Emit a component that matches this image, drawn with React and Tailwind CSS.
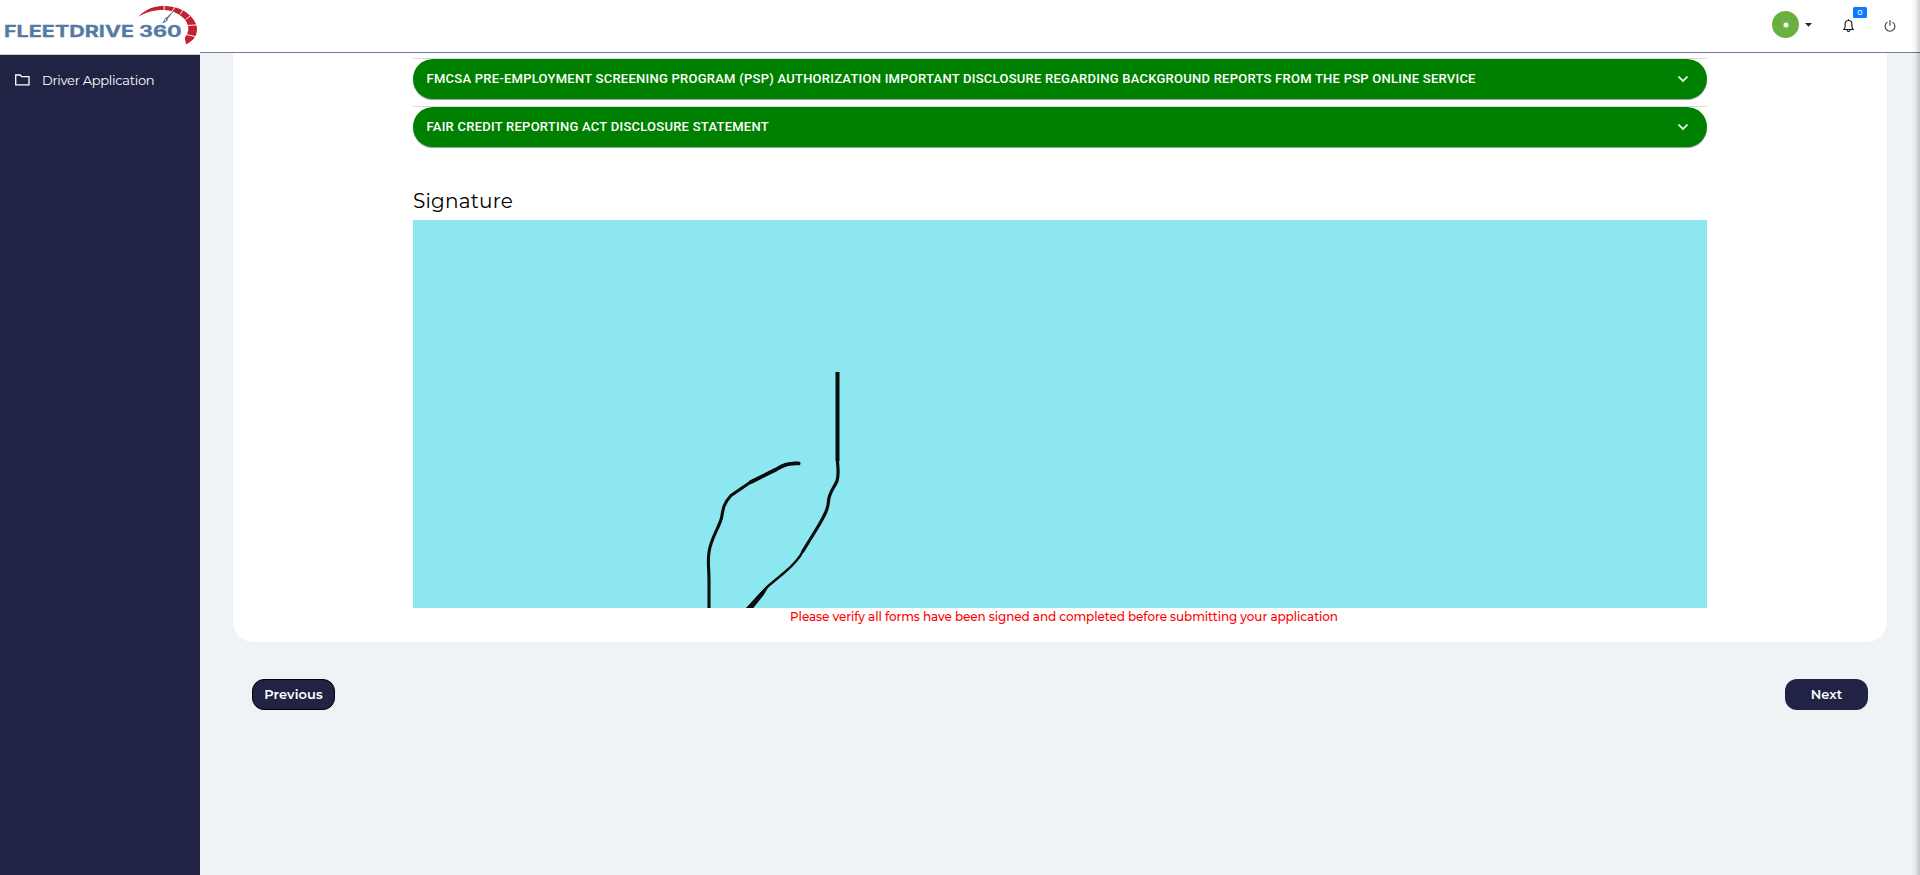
import React from "react";

const DISCLOSURES = [
  "FMCSA PRE-EMPLOYMENT SCREENING PROGRAM (PSP) AUTHORIZATION IMPORTANT DISCLOSURE REGARDING BACKGROUND REPORTS FROM THE PSP ONLINE SERVICE",
  "FAIR CREDIT REPORTING ACT DISCLOSURE STATEMENT",
];

function Logo() {
  return (
    <svg width="200" height="54" viewBox="0 0 200 54">
      <g fontSize="15.5" fontWeight="700" fill="#557ba3" stroke="#557ba3" strokeWidth="0.3" fontFamily="Inter, 'Liberation Sans', sans-serif">
        <text x="4" y="36.600" textLength="130" lengthAdjust="spacingAndGlyphs">
          FLEETDRIVE
        </text>
        <text x="139" y="36.600" textLength="42.500" lengthAdjust="spacingAndGlyphs">
          360
        </text>
      </g>
      <path
        d="M138 17C146 8.500 155 6 164 6C175 6 185 10 191 16.500C195 21 197 25 197 29C197 33 196 36 193.500 39Q190 42.500 186 44.500L184.800 37.500C187.500 34.500 188.500 31 188.300 28C188 24 186 20 182 16.800C177 12.800 171 10.300 164 10C154 9.800 146 12 138 17Z"
        fill="#c32032"
      />
      <path
        d="M164.200 5V11M180 14.500L183 10M185.500 19.500L192 14.500M187 25.500L198 24.800M186.500 34.500L197 37M175.500 6L171 13"
        stroke="#fff"
        strokeWidth="0.9"
      />
      <path d="M176.500 8L168 18.500L167.200 21L162 23.800L165 18.500L167 17Z" fill="#557ba3" />
      <circle cx="165.600" cy="20" r="0.800" fill="#fff" />
    </svg>
  );
}

function Sidebar() {
  return (
    <aside className="flex w-[200px] shrink-0 flex-col bg-[#212344]">
      <div className="h-[55px] border-b border-[#c9c9cb] bg-white">
        <Logo />
      </div>
      <nav className="flex h-[50px] items-center pl-[15px]">
        <svg width="15" height="12" viewBox="0 0 15 12" fill="none" stroke="#fff" strokeWidth="1.3">
          <path d="M0.700 10.800V1H5.200L6.700 2.700H14V10.800Z" />
        </svg>
        <span className="ml-[12px] text-[13px] leading-[20px] tracking-[-0.28px] text-white">Driver Application</span>
      </nav>
    </aside>
  );
}

function Header() {
  return (
    <header className="flex h-[53px] shrink-0 border-b border-[#7674a8] bg-white">
      <div className="ml-auto flex pt-[11px] pr-[24px]">
        <div className="flex size-[27px] items-center justify-center rounded-full bg-[#69b040]">
          <svg width="8" height="8" viewBox="0 0 8 8">
            <circle cx="4" cy="4" r="2.1" fill="#fff" />
            <path d="M4 .8V7.200M.8 4H7.200M1.600 1.600L6.400 6.400M6.400 1.600L1.600 6.400" stroke="#fff" strokeWidth=".8" />
          </svg>
        </div>
        <svg className="mt-[12px] ml-[6px]" width="7" height="4" viewBox="0 0 7 4">
          <path d="M0 0H7L3.500 3.800Z" fill="#212529" />
        </svg>
        <div className="relative mt-[8px] ml-[31px] h-[14px] w-[11px]">
          <svg width="11" height="14" viewBox="0 0 11 14" fill="none" stroke="#17171c" strokeWidth="1.100">
            <path d="M5.500 .2V1.500M.8 10.500H10.200Q8.900 9 8.900 7.500V5C8.900 2.800 7.400 1.500 5.500 1.500S2.100 2.800 2.100 5V7.500Q2.100 9 .8 10.500Z" />
            <path d="M4 11Q4.200 12.600 5.500 12.600T7 11" />
          </svg>
          <span className="absolute top-[-12px] left-[10px] flex h-[11px] w-[14px] items-center justify-center rounded-[1.5px] bg-[#0a7cff] pb-[1px] text-[8px] leading-none font-medium text-white">
            0
          </span>
        </div>
        <svg className="mt-[9px] ml-[30px]" width="12" height="13" viewBox="0 0 12 13" fill="none" stroke="#3d3b52" strokeWidth="1.100">
          <path d="M3.500 2.100A4.900 4.900 0 1 0 8.500 2.100M6 0V5.800" />
        </svg>
      </div>
    </header>
  );
}

function DisclosureBar({ title }) {
  return (
    <div className="border-t border-[#dedede]">
      <button className="flex h-[40px] w-full items-center rounded-[20px] bg-[#008000] pr-[18px] pl-[13.5px] font-[Roboto,sans-serif] text-[13px] font-medium tracking-[0.25px] text-white shadow-[0_1px_1px_rgba(0,0,0,0.4)]">
        <span className="whitespace-nowrap">{title}</span>
        <svg className="ml-auto" width="12" height="8" viewBox="0 0 12 8" fill="none" stroke="#fff" strokeWidth="1.700">
          <path d="M1.500 1.500L6 6L10.500 1.500" />
        </svg>
      </button>
    </div>
  );
}

function SignaturePad() {
  return (
    <div className="h-[388px] bg-[#8de7f0]">
      <svg width="1294" height="388" viewBox="413 220 1294 388" fill="none" stroke="#080c0c" strokeLinecap="round" strokeLinejoin="round">
        <path d="M837.500 372V461" strokeWidth="4" strokeLinecap="butt" />
        <path d="M837.500 460V462C838 469 839 474 837 481C834 488 829 493 828.500 501C828 510 824 516 819 525L803 551" strokeWidth="3.200" />
        <path d="M803 551C799 559 792 566 785 572L767 587L747 609" strokeWidth="2.400" />
        <path d="M769 585.500L761 592L744.500 610H751.500L763.500 595Z" fill="#080c0c" strokeWidth="0.400" />
        <path d="M799 463.500C788 462.500 782 466 776 469.500L750 482.500L731 495.500C723 504 723 510 721.500 518C718 530 711 538 709 552C707.500 562 709 568 709 580V609" strokeWidth="3.100" />
        <path d="M800 463.500C788 462.500 782 466 776 469.500L750 482.500" strokeWidth="3.700" strokeLinecap="butt" />
      </svg>
    </div>
  );
}

export default function App() {
  return (
    <div className="relative flex h-[875px] w-[1920px] overflow-hidden bg-[#eff3f6] font-[Montserrat,Inter,sans-serif]">
      <Sidebar />
      <div className="flex min-w-0 flex-1 flex-col">
        <Header />
        <main className="flex-1 px-[33px]">
          <section className="h-[589px] rounded-b-[20px] bg-white px-[180px] pt-[5px]">
            <div className="flex flex-col gap-[7px]">
              {DISCLOSURES.map((title) => (
                <DisclosureBar key={title} title={title} />
              ))}
            </div>
            <h2 className="mt-[41px] mb-[5px] text-[20px] leading-[27px] tracking-[0.2px] text-black">Signature</h2>
            <SignaturePad />
            <p className="pl-[8px] text-center text-[12px] leading-[17px] font-medium tracking-[-0.076px] text-[#ff0000]">
              Please verify all forms have been signed and completed before submitting your application
            </p>
          </section>
          <div className="mt-[37px] flex justify-between px-[19px]">
            <button className="h-[31px] w-[83px] rounded-[12px] border border-black bg-[#212344] pb-[2px] text-[13px] leading-[20px] font-semibold tracking-[0.12px] text-white">
              Previous
            </button>
            <button className="h-[31px] w-[83px] rounded-[12px] bg-[#212344] pb-[2px] text-[13px] leading-[20px] font-semibold text-white">
              Next
            </button>
          </div>
        </main>
      </div>
      <div className="absolute inset-y-0 right-0 w-[9px] bg-linear-to-r from-transparent via-black/5 to-black/20" />
    </div>
  );
}
